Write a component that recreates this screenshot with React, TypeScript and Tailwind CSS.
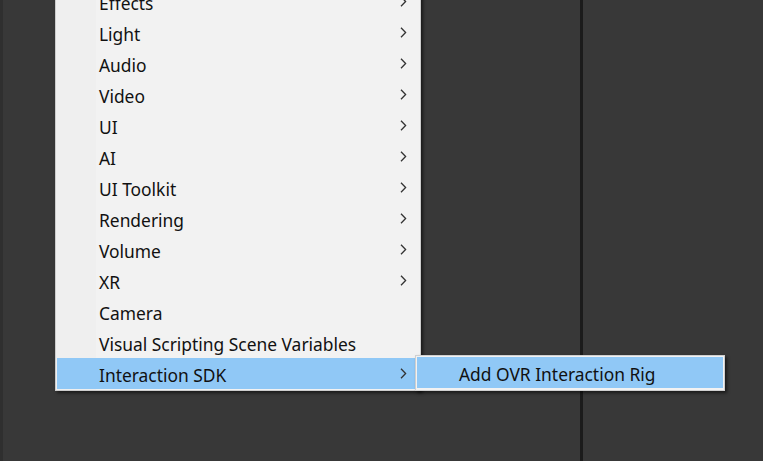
type Item = {
  label: string;
  sub?: boolean;
  active?: boolean;
};

const items: Item[] = [
  { label: 'Effects', sub: true },
  { label: 'Light', sub: true },
  { label: 'Audio', sub: true },
  { label: 'Video', sub: true },
  { label: 'UI', sub: true },
  { label: 'AI', sub: true },
  { label: 'UI Toolkit', sub: true },
  { label: 'Rendering', sub: true },
  { label: 'Volume', sub: true },
  { label: 'XR', sub: true },
  { label: 'Camera' },
  { label: 'Visual Scripting Scene Variables' },
  { label: 'Interaction SDK', sub: true, active: true },
];

function Chevron() {
  return (
    <svg width="7" height="11" viewBox="0 0 7 11" className="shrink-0">
      <path d="M1 0.8 L5.6 5.5 L1 10.2" fill="none" stroke="#333" strokeWidth="1.3" />
    </svg>
  );
}

export default function App() {
  return (
    <div
      className="relative w-[763px] h-[461px] overflow-hidden bg-[#383838] text-[#111]"
      style={{ fontFamily: '"Noto Sans", "Open Sans", sans-serif' }}
    >
      <div className="flex h-full">
        <div className="w-[3px] bg-[#2f2f2f]" />
        <div className="w-[577px]" />
        <div className="w-[3px] bg-[#1b1b1b]" />
        <div className="flex-1" />
      </div>

      {/* main context menu */}
      <div className="absolute left-[55px] top-[-16px] w-[366px] border border-[#cccccc] bg-[linear-gradient(to_right,#efefef_40px,#f2f2f2_40px)] p-[1px] shadow-[2px_2px_3px_rgba(0,0,0,0.55)]">
        {items.map((it) => (
          <div
            key={it.label}
            className={`flex items-center h-[31px] pl-[42px] pr-[12px] ${
              it.active ? 'bg-[#90c8f6]' : ''
            }`}
          >
            <span className="flex-1 pt-[4px] text-[17.4px] leading-none">{it.label}</span>
            {it.sub && <Chevron />}
          </div>
        ))}
      </div>

      {/* submenu */}
      <div className="absolute left-[415px] top-[355px] w-[310px] border border-[#cfcfcf] bg-[#f2f2f2] px-[1px] pt-[1px] pb-[2px] shadow-[2px_2px_3px_rgba(0,0,0,0.55)]">
        <div className="flex items-center h-[31px] pl-[42px] pt-[4px] bg-[#90c8f6] text-[17.4px] leading-none">
          Add OVR Interaction Rig
        </div>
      </div>
    </div>
  );
}
